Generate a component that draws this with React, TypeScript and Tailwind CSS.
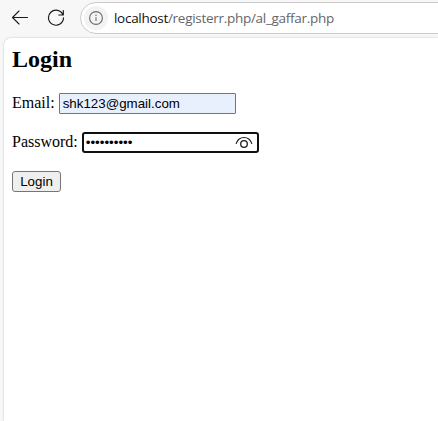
import React, { useState } from "react";

function BrowserBar() {
  return (
    <header className="flex h-[38px] items-start pt-[2px]">
      <svg className="ml-[11px] mt-[7px] shrink-0" width="18" height="18" viewBox="0 0 18 18" fill="none" stroke="#1b1b1b" strokeWidth="1.1" strokeLinecap="round" strokeLinejoin="round">
        <path d="M16.5 8.5H1.5M8 2L1.5 8.5L8 15" />
      </svg>
      <svg className="ml-[18px] mt-[7px] shrink-0" width="18" height="18" viewBox="0 0 18 18" fill="none" stroke="#1b1b1b" strokeWidth="1.2" strokeLinecap="round" strokeLinejoin="round">
        <path d="M16 6A7.5 7.5 0 1 0 16.5 8.8M16.3 1.5V6H11.8" />
      </svg>
      <div className="-mr-5 ml-[15px] flex h-8 flex-1 items-center rounded-full border border-[#cbcbcb] bg-white pl-[3px]">
        <span className="flex size-6 shrink-0 items-center justify-center rounded-full bg-[#f3f3f3]">
          <svg width="14" height="14" viewBox="0 0 14 14" fill="none" stroke="#6b6b6b" strokeWidth="1.1">
            <circle cx="7" cy="7" r="6.4" />
            <path d="M7 6.2V10" />
            <circle cx="7" cy="4.2" r="0.75" fill="#6b6b6b" stroke="none" />
          </svg>
        </span>
        <span className="ml-[6px] whitespace-nowrap font-['Open_Sans','Noto_Sans',sans-serif] text-[13.5px] leading-5 tracking-[-0.29px] text-[#666]">
          <span className="text-[#111]">localhost</span>/registerr.php/al_gaffar.php
        </span>
      </div>
    </header>
  );
}

function RevealIcon() {
  return (
    <svg width="18" height="13" viewBox="0 0 18 13" fill="none" stroke="#1b1b1b" strokeWidth="1.1" strokeLinecap="round">
      <path d="M1.2 7.5C2.6 3.6 5.3 1.5 9 1.5S15.4 3.6 16.8 7.5" />
      <circle cx="9" cy="8" r="3.3" strokeWidth="1.3" />
    </svg>
  );
}

export default function App() {
  const [email, setEmail] = useState("shk123@gmail.com");
  return (
    <div className="flex h-screen flex-col overflow-hidden bg-[#f7f7f7]">
      <BrowserBar />
      <main className="ml-1 flex-1 rounded-tl-[7px] bg-white px-2 pt-[7px] font-['Liberation_Serif',serif] text-base leading-[18px] text-black shadow-[0_0_2px_rgba(0,0,0,0.25)]">
        <h2 className="text-2xl font-bold leading-7">Login</h2>
        <form className="mt-5 flex flex-col items-start gap-[18px]" onSubmit={(e) => e.preventDefault()}>
          <label className="flex h-[21px] items-center gap-1">
            <span className="pb-[2px]">Email:</span>
            <input
              className="h-[21px] w-[177px] rounded-[1px] border border-[#767676] bg-[#e8f0fe] px-[3px] font-['Liberation_Sans',sans-serif] text-[13.333px] outline-none"
              value={email}
              onChange={(e) => setEmail(e.target.value)}
            />
          </label>
          <div className="flex h-[21px] items-center gap-1">
            <span className="pb-[2px]">Password:</span>
            <div className="flex h-[21px] w-[177px] items-center justify-between rounded-[3px] border-2 border-[#101010] bg-white pl-[2px] pr-1">
              <span className="font-['Liberation_Sans',sans-serif] text-[13.333px] leading-[15px]">
                ••••••••••
              </span>
              <button type="button">
                <RevealIcon />
              </button>
            </div>
          </div>
          <button className="h-[21px] w-[49px] rounded-[3px] border border-[#767676] bg-[#efefef] font-['Liberation_Sans',sans-serif] text-[13.333px] leading-[15px]">
            Login
          </button>
        </form>
      </main>
    </div>
  );
}
